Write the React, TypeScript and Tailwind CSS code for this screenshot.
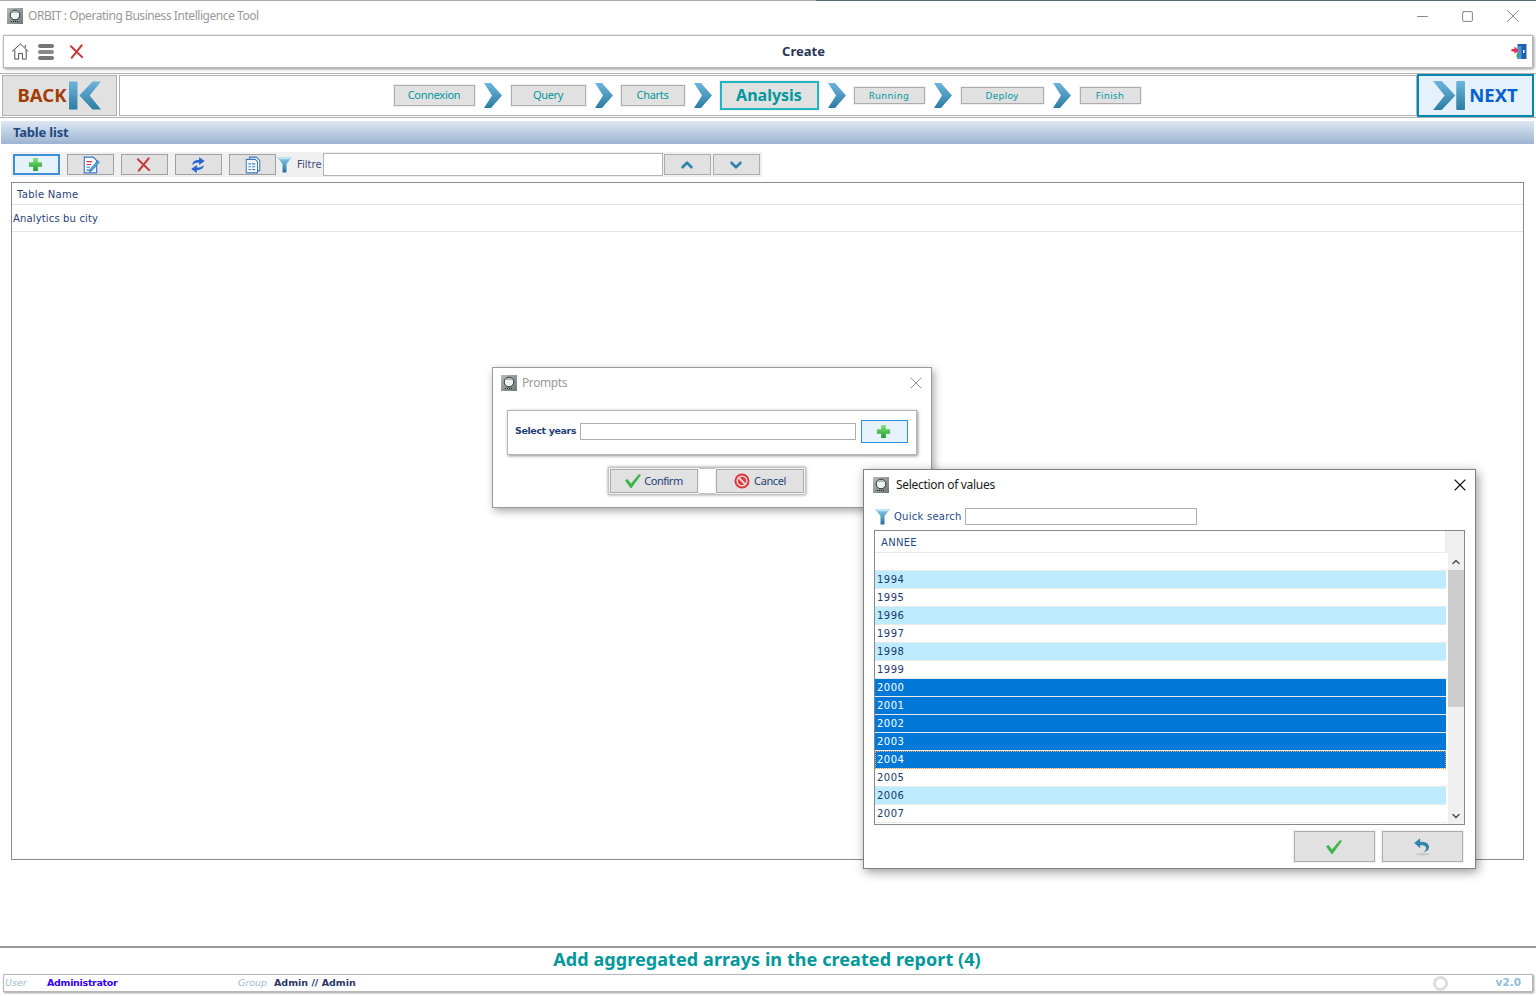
import React from 'react'
import { ChevronDown, ChevronUp, Minus, Square, X } from 'lucide-react'

// small gradient defs shared by the chevrons
const ChevronDefs = () => (
  <svg width="0" height="0" className="absolute">
    <defs>
      <linearGradient id="chev" x1="0" y1="0" x2="0" y2="1">
        <stop offset="0" stopColor="#6db4dc" />
        <stop offset="1" stopColor="#2c7da3" />
      </linearGradient>
      <linearGradient id="plus" x1="0" y1="0" x2="0" y2="1">
        <stop offset="0" stopColor="#86e27a" />
        <stop offset="1" stopColor="#1f9a2e" />
      </linearGradient>
      <linearGradient id="funnel" x1="0" y1="0" x2="0" y2="1">
        <stop offset="0" stopColor="#8fd0ea" />
        <stop offset="1" stopColor="#1f6f9c" />
      </linearGradient>
      <linearGradient id="appicon" x1="0" y1="0" x2="1" y2="1">
        <stop offset="0" stopColor="#b4bcbc" />
        <stop offset="1" stopColor="#6c7676" />
      </linearGradient>
    </defs>
  </svg>
)

const StepArrow = ({ className = 'h-[25px] w-[18px]' }: { className?: string }) => (
  <svg viewBox="0 0 18 25" className={className}>
    <path d="M0 0h7l11 12.5L7 25H0l8-12.5z" fill="url(#chev)" />
  </svg>
)

const AppIcon = () => (
  <svg viewBox="0 0 16 16" className="h-4 w-4 shrink-0">
    <rect width="16" height="16" fill="url(#appicon)" />
    <circle cx="8" cy="7" r="4.800" fill="#eef2f3" stroke="#333" strokeWidth="1" />
    <path d="M5.500 5a3.400 3.400 0 0 1 5 0" stroke="#8d9a9c" strokeWidth="1.100" fill="none" />
    <path d="M4 13.500h8" stroke="#222" strokeWidth="1" strokeDasharray="1 1" />
  </svg>
)

const PlusIcon = () => (
  <svg viewBox="0 0 16 16" className="h-[15px] w-[15px]">
    <path d="M5.500 1h5v4.500H15v5h-4.500V15h-5v-4.500H1v-5h4.500z" fill="url(#plus)" />
  </svg>
)

const RedCross = ({ size = 'h-[15px] w-[15px]' }: { size?: string }) => (
  <svg viewBox="0 0 16 16" className={size}>
    <path d="M2 2.500 14 14M13.500 1.500 3 14.500" stroke="#c8383a" strokeWidth="2.200" strokeLinecap="round" fill="none" />
  </svg>
)

const EditIcon = () => (
  <svg viewBox="0 0 16 16" className="h-[18px] w-[18px]">
    <path d="M2 1h8l3 3v11H2z" fill="#f4f9ff" stroke="#3b78c4" />
    <path d="M4 5h5M4 7.500h4" stroke="#d8383a" />
    <path d="M4 10h3M4 12.500h3" stroke="#3b78c4" />
    <path d="M7 12 14 4l1.500 1.500L8.500 13.500 6.500 14z" fill="#4aa3dc" stroke="#2f6ea8" strokeWidth=".5" />
  </svg>
)

const RefreshIcon = () => (
  <svg viewBox="0 0 16 16" className="h-[18px] w-[18px]" fill="#2a63d4">
    <path d="M3 8c0-3 2-4.500 6-4.500V1l5 3.500L9 8V5.700C6 5.700 4.500 6.300 3 8z" />
    <path d="M13 8c0 3-2 4.500-6 4.500V15l-5-3.500L7 8v2.300c3 0 4.500-.6 6-2.300z" />
  </svg>
)

const DocsIcon = () => (
  <svg viewBox="0 0 16 16" className="h-[18px] w-[18px]" fill="#f4f9ff" stroke="#3f79bd" strokeWidth=".9">
    <path d="M5 1h6l3 3v9H5z" />
    <path d="M2 3h8l2 2v10H2z" />
    <path d="M4 7h2M7 7h3M4 9.500h2M7 9.500h3M4 12h2M7 12h3" />
  </svg>
)

const Funnel = () => (
  <svg viewBox="0 0 16 17" className="h-[17px] w-[17px] shrink-0">
    <path d="M.5 1h15L10 8v8.500H6V8z" fill="url(#funnel)" />
    <ellipse cx="8" cy="2" rx="7" ry="1.300" fill="#bfe5f4" />
  </svg>
)

const CheckMark = () => (
  <svg viewBox="0 0 16 14" className="h-[14px] w-4">
    <path d="M0 6.500 2.500 5 6 9.500 14 0l2 1-9.500 13H5.500z" fill="#3db54a" />
  </svg>
)

const CancelIcon = () => (
  <svg viewBox="0 0 16 16" className="h-4 w-4">
    <circle cx="8" cy="8" r="7.500" fill="#d8353c" />
    <circle cx="8" cy="8" r="4.800" fill="none" stroke="#f7d4d4" strokeWidth="1.600" />
    <path d="m4.500 4.500 7 7" stroke="#f7d4d4" strokeWidth="2" />
  </svg>
)

const UndoIcon = () => (
  <svg viewBox="0 0 16 16" className="h-[19px] w-[19px]">
    <ellipse cx="8.500" cy="14.500" rx="6" ry="1" fill="#c6c6c6" />
    <path d="M6 1 1 5l5 4.500V7c3 0 5 .5 5 2.500 0 1.500-1 2.500-2.500 3 3 0 5-1.500 5-4C13.500 5 10 4 6 4z" fill="#3584ad" />
  </svg>
)

const ExitIcon = () => (
  <svg viewBox="0 0 16 18" className="h-[18px] w-[17px]">
    <path d="M6 1h9v15H6z" fill="#1f5fae" />
    <path d="M6 3h4v13H6z" fill="#4b93d8" />
    <rect x="11.500" y="7" width="1.500" height="3" fill="#fff" />
    <path d="M0 6h3V3.500L7 7.500 3 11V8.500H0z" fill="#e62b4a" />
    <path d="M5 11h3v3H5z" fill="#3aa655" />
  </svg>
)

const GrayButton = ({
  className = '',
  children,
}: {
  className?: string
  children: React.ReactNode
}) => (
  <div className={`flex items-center justify-center border border-[#adadad] bg-[#e1e1e1] shadow-[0_0_0_1px_#f0f0f0] ${className}`}>
    {children}
  </div>
)

const steps = [
  { label: 'Connexion', cls: 'w-[81px] h-[21px] text-[11px] tracking-[-0.3px]' },
  { label: 'Query', cls: 'w-[75px] h-[21px] text-[11px] tracking-[-0.3px]' },
  { label: 'Charts', cls: '-ml-px w-[64px] h-[21px] text-[11px] tracking-[-0.3px]' },
  { label: 'Analysis', cls: '-ml-px w-[99px] h-[29px] pb-px text-[16px] font-bold border-2 !border-[#20b8c0]' },
  { label: 'Running', cls: '-ml-px w-[71px] h-[17px] pt-px text-[9.500px] tracking-[0.4px]' },
  { label: 'Deploy', cls: 'w-[83px] h-[17px] pt-px text-[9.500px] tracking-[0.3px]' },
  { label: 'Finish', cls: 'w-[61px] h-[17px] pt-px text-[9.500px] tracking-[0.4px]' },
]

const years = [
  '', '1994', '1995', '1996', '1997', '1998', '1999', '2000', '2001', '2002', '2003', '2004', '2005', '2006', '2007',
]

const selected = ['2000', '2001', '2002', '2003', '2004']

const rowClass = (y: string, i: number) => {
  if (selected.includes(y)) return 'bg-[#0078d7] text-white'
  return i % 2 === 1 ? 'bg-[#bdebff] text-[#1b3a6b]' : 'bg-white text-[#1b3a6b]'
}

const Prompts = () => (
  <div className="absolute left-[492px] top-[367px] flex h-[141px] w-[440px] flex-col border border-[#9a9a9a] bg-white shadow-[2px_3px_8px_rgba(0,0,0,0.35)]">
    <div className="flex h-[30px] items-center pl-[8px] pr-[5px]">
      <AppIcon />
      <span className="ml-[5px] text-[12px] tracking-[-0.4px] text-[#9a9a9a]">Prompts</span>
      <X className="ml-auto h-[20px] w-[20px] text-[#8a8a8a]" strokeWidth={1.100} />
    </div>
    <div className="mx-[14px] mt-[12px] flex h-[45px] items-center border border-[#b5b5b5] pb-[3px] pl-[7px] shadow-[1px_1px_3px_rgba(0,0,0,0.45)]">
      <span className="w-[61px] whitespace-nowrap text-[9.500px] font-bold tracking-[-0.4px] text-[#1f3f77] [font-family:'DejaVu_Sans',sans-serif]">Select years</span>
      <div className="ml-[4px] h-[17px] w-[276px] border border-[#adadad]" />
      <div className="ml-[5px] flex h-[23px] w-[47px] items-center justify-center border border-[#2f8fdc] bg-[#e5f1fb] pr-[3px]">
        <PlusIcon />
      </div>
    </div>
    <div className="ml-[115px] mt-[12px] flex h-[28px] w-[198px] items-center justify-between self-start border-2 border-[#c4c4c4] bg-white shadow-[0_0_3px_rgba(0,0,0,0.4)]">
      <GrayButton className="h-[24px] w-[88px] gap-[3px]">
        <CheckMark />
        <span className="text-[11px] tracking-[-0.5px] text-[#1f3f77]">Confirm</span>
      </GrayButton>
      <GrayButton className="h-[24px] w-[88px] gap-[4px]">
        <CancelIcon />
        <span className="text-[11px] tracking-[-0.4px] text-[#1f3f77]">Cancel</span>
      </GrayButton>
    </div>
  </div>
)

const Selection = () => (
  <div className="absolute left-[863px] top-[469px] flex h-[400px] w-[613px] flex-col border border-[#808080] bg-white shadow-[2px_3px_10px_rgba(0,0,0,0.4)]">
    <div className="flex h-[30px] items-center pl-[9px] pr-[5px]">
      <AppIcon />
      <span className="ml-[7px] text-[12px] tracking-[-0.3px] text-[#1a1a1a]">Selection of values</span>
      <X className="ml-auto h-[20px] w-[20px] text-[#111]" strokeWidth={1.300} />
    </div>
    <div className="ml-[10px] mt-[8px] flex h-[17px] items-center">
      <Funnel />
      <span className="ml-[3px] text-[10px] tracking-[0.25px] text-[#1f4a86] [font-family:'DejaVu_Sans',sans-serif]">Quick search</span>
      <div className="ml-[3px] h-[17px] w-[232px] border border-[#adadad]" />
    </div>
    <div className="mx-[10px] mt-[5px] flex h-[295px] flex-col border border-[#808a90]">
      <div className="flex h-[22px] shrink-0">
        <div className="flex flex-1 items-center border-b border-r border-[#e8e8e8] pl-[6px] pt-[2px] text-[10px] tracking-[0.3px] text-[#1f4a86] [font-family:'DejaVu_Sans',sans-serif]">
          ANNEE
        </div>
        <div className="w-[18px] bg-[#efefef]" />
      </div>
      <div className="flex min-h-0 flex-1">
        <div className="flex-1 overflow-hidden">
          {years.map((y, i) => (
            <div
              key={y || 'blank'}
              className={`flex h-[18px] items-center border-b border-[#e9e9e9] pl-[2px] text-[10px] tracking-[0.5px] [font-family:'DejaVu_Sans',sans-serif] ${rowClass(y, i)} ${y === '2004' ? 'outline-1 -outline-offset-1 outline-dotted outline-[#e8a060]' : ''}`}
            >
              {y}
            </div>
          ))}
        </div>
        <div className="flex w-[18px] flex-col border-l-2 border-white bg-[#f0f0f0]">
          <div className="flex h-[17px] items-center justify-center">
            <ChevronUp className="h-3 w-3 text-[#505050]" strokeWidth={3} />
          </div>
          <div className="h-[137px] bg-[#cdcdcd]" />
          <div className="flex-1" />
          <div className="flex h-[17px] items-center justify-center">
            <ChevronDown className="h-3 w-3 text-[#505050]" strokeWidth={3} />
          </div>
        </div>
      </div>
    </div>
    <div className="mr-[12px] mt-[6px] flex justify-end gap-[7px]">
      <GrayButton className="h-[31px] w-[81px] pr-[2px]">
        <CheckMark />
      </GrayButton>
      <GrayButton className="h-[31px] w-[81px]">
        <UndoIcon />
      </GrayButton>
    </div>
  </div>
)

export default function App() {
  return (
    <div className="relative flex h-[996px] w-[1536px] flex-col overflow-hidden bg-white [font-family:'Noto_Sans',sans-serif]">
      <ChevronDefs />

      <div className="flex h-px shrink-0">
        <div className="w-[816px] bg-[#a8a8a8]" />
        <div className="flex-1 bg-[#4f6f70]" />
      </div>

      {/* window title */}
      <div className="flex h-[34px] shrink-0 items-center pb-[4px] pl-[7px]">
        <AppIcon />
        <span className="ml-[5px] text-[12px] tracking-[-0.45px] text-[#999]">ORBIT : Operating Business Intelligence Tool</span>
        <div className="ml-auto flex items-center pr-px text-[#808080]">
          <div className="flex w-[45px] justify-center"><Minus className="h-[17px] w-[17px]" strokeWidth={1.300} /></div>
          <div className="flex w-[45px] justify-center"><Square className="h-[13px] w-[13px]" strokeWidth={1.800} /></div>
          <div className="flex w-[45px] justify-center"><X className="h-[22px] w-[22px]" strokeWidth={1} /></div>
        </div>
      </div>

      {/* toolbar */}
      <div className="mx-[3px] flex h-[33px] shrink-0 items-center border border-[#b8b8b8] pl-[7px] pr-[4px] shadow-[1px_1px_3px_rgba(0,0,0,0.45)]">
        <svg viewBox="0 0 20 20" className="h-[19px] w-[19px]" fill="none" stroke="#444" strokeWidth="1">
          <path d="M1 10 10 2l8 8M4 8v10h4v-6h4v6h4V8M15 3v3" />
        </svg>
        <div className="ml-[8px] flex w-[16px] flex-col gap-[2px]">
          <div className="h-[4px] rounded-sm bg-[#777]" />
          <div className="h-[4px] rounded-sm bg-[#888]" />
          <div className="h-[4px] rounded-sm bg-[#777]" />
        </div>
        <div className="ml-[15px] flex">
          <RedCross />
        </div>
        <div className="flex-1 pl-[12px] text-center text-[13px] font-bold text-[#2a3555]">Create</div>
        <ExitIcon />
      </div>

      {/* wizard steps */}
      <div className="mt-[5px] flex h-[45px] shrink-0 items-stretch border-y border-[#b0b0b0] py-px pl-[2px] pr-[2px]">
        <div className="flex w-[115px] shrink-0 items-center justify-center border border-[#adadad] bg-[#e1e1e1]">
          <span className="pb-px text-[18.500px] font-bold text-[#a33c00]">BACK</span>
          <svg viewBox="0 0 34 30" className="ml-[3px] h-[29px] w-[32px]">
            <rect width="9" height="30" rx="1" fill="url(#chev)" />
            <path d="M34 0h-9L11 15l14 15h9L22 15z" fill="url(#chev)" />
          </svg>
        </div>
        <div className="ml-[2px] flex flex-1 items-center justify-center gap-[9px] border border-[#b0b0b0] pr-[2px]">
          {steps.map((s, i) => (
            <React.Fragment key={s.label}>
              <GrayButton className={`${s.cls} text-[#00989c]`}>
                {s.label}
              </GrayButton>
              {i < steps.length - 1 && <StepArrow />}
            </React.Fragment>
          ))}
        </div>
        <div className="-my-px flex w-[117px] shrink-0 items-center justify-center border-2 border-[#0088b0] bg-[#e5f1fb]">
          <svg viewBox="0 0 33 30" className="h-[29px] w-[32px]">
            <path d="M0 0h9l14 15L9 30H0l12-15z" fill="url(#chev)" />
            <rect x="24" width="9" height="30" rx="1" fill="url(#chev)" />
          </svg>
          <span className="ml-[4px] pb-px text-[18.500px] font-bold text-[#0060d0]">NEXT</span>
        </div>
      </div>

      {/* section header */}
      <div className="ml-px mr-[2px] mt-[3px] flex h-[23px] shrink-0 items-center bg-gradient-to-b from-[#dde7f3] to-[#9cb4d2] pl-[12px] text-[13px] font-bold tracking-[-0.2px] text-[#1f4a7d]">
        Table list
      </div>

      {/* list toolbar */}
      <div className="ml-[11px] mt-[8px] flex h-[25px] w-[751px] shrink-0 items-center bg-[#f0f0f0] pl-[2px]">
        <div className="flex h-[21px] w-[47px] items-center justify-center border-2 border-[#3f8fd6] bg-[#e5f1fb] pr-[3px]">
          <PlusIcon />
        </div>
        <GrayButton className="ml-[7px] h-[21px] w-[47px] !border-[#a0a0a0]"><EditIcon /></GrayButton>
        <GrayButton className="ml-[7px] h-[21px] w-[47px] !border-[#a0a0a0] pr-[2px]"><RedCross /></GrayButton>
        <GrayButton className="ml-[7px] h-[21px] w-[47px] !border-[#a0a0a0] pr-px"><RefreshIcon /></GrayButton>
        <GrayButton className="ml-[7px] h-[21px] w-[47px] !border-[#a0a0a0]"><DocsIcon /></GrayButton>
        <div className="flex"><Funnel /></div>
        <span className="ml-[4px] text-[10px] text-[#4a4a7a] [font-family:'DejaVu_Sans',sans-serif]">Filtre</span>
        <div className="ml-px h-[23px] w-[340px] border border-[#b4b4b4] bg-white" />
        <GrayButton className="ml-px h-[21px] w-[47px]">
          <ChevronUp className="h-[18px] w-[18px] text-[#2f83ad]" strokeWidth={3.500} />
        </GrayButton>
        <GrayButton className="ml-[2px] h-[21px] w-[47px]">
          <ChevronDown className="h-[18px] w-[18px] text-[#2f83ad]" strokeWidth={3.500} />
        </GrayButton>
      </div>

      {/* table */}
      <div className="ml-[11px] mt-[5px] h-[678px] w-[1513px] shrink-0 border border-[#8a8a8a] text-[10px] tracking-[0.3px] text-[#2a3f77] [font-family:'DejaVu_Sans',sans-serif]">
        <div className="flex h-[22px] items-center border-b border-[#e4e4e4] pl-[5px] pt-[2px]">Table Name</div>
        <div className="flex h-[27px] items-center border-b border-[#e4e4e4] pl-px tracking-[0.15px]">Analytics bu city</div>
      </div>

      {/* footer */}
      <div className="mt-[86px] flex h-[28px] shrink-0 items-center justify-center border-t-2 border-[#9a9a9a] pb-[4px] pr-[2px] text-[18px] font-bold tracking-[0.08px] text-[#00989c]">
        Add aggregated arrays in the created report (4)
      </div>
      <div className="mx-[3px] flex h-[18px] shrink-0 items-center border border-[#b8b8b8] text-[9.500px] shadow-[1px_1px_2px_rgba(0,0,0,0.4)] [font-family:'DejaVu_Sans',sans-serif]">
        <span className="ml-px w-[42px] italic text-[#9dbdd2]">User</span>
        <span className="w-[191px] font-bold tracking-[-0.3px] text-[#3300ff]">Administrator</span>
        <span className="w-[36px] italic text-[#9dbdd2]">Group</span>
        <span className="font-bold text-[#2a3565]">Admin // Admin</span>
        <div className="ml-auto mr-[48px] h-[15px] w-[15px] rounded-full border-[3px] border-[#dcdde2]" />
        <span className="mr-[11px] text-[10.500px] font-bold text-[#8fbcd8]">v2.0</span>
      </div>

      <Prompts />
      <Selection />
    </div>
  )
}
